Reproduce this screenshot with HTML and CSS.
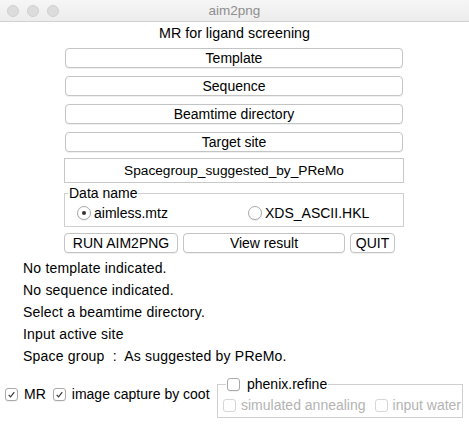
FILE: index.html
```html
<!DOCTYPE html>
<html>
<head>
<meta charset="utf-8">
<link rel="stylesheet" href="styles.css">
</head>
<body>
<div class="window">
  <div class="titlebar">
    <div class="lights"><span></span><span></span><span></span></div>
    <div class="title">aim2png</div>
    <div></div>
  </div>
  <div class="content">
    <div class="heading">MR for ligand screening</div>
    <div class="stack">
      <div class="btn wide">Template</div>
      <div class="btn wide">Sequence</div>
      <div class="btn wide">Beamtime directory</div>
      <div class="btn wide">Target site</div>
      <div class="entry">Spacegroup_suggested_by_PReMo</div>
      <fieldset class="frame data">
        <legend>Data name</legend>
        <div class="radios">
          <div class="radio on"><span class="rb"></span>aimless.mtz</div>
          <div class="radio"><span class="rb"></span>XDS_ASCII.HKL</div>
        </div>
      </fieldset>
      <div class="actions">
        <div class="btn run">RUN AIM2PNG</div>
        <div class="btn view">View result</div>
        <div class="btn quit">QUIT</div>
      </div>
    </div>
    <div class="status">
      <div>No template indicated.</div>
      <div>No sequence indicated.</div>
      <div>Select a beamtime directory.</div>
      <div>Input active site</div>
      <div>Space group &nbsp;:&nbsp; As suggested by PReMo.</div>
    </div>
    <div class="options">
      <div class="check on"><span class="cb"><svg viewBox="0 0 13 13"><path d="M3.2 6.8 L5.4 9.2 L9.8 3.6"/></svg></span>MR</div>
      <div class="check on"><span class="cb"><svg viewBox="0 0 13 13"><path d="M3.2 6.8 L5.4 9.2 L9.8 3.6"/></svg></span>image capture by coot</div>
      <fieldset class="frame phenix">
        <legend><span class="check"><span class="cb"></span>phenix.refine</span></legend>
        <div class="inner">
          <div class="check disabled"><span class="cb"></span>simulated annealing</div>
          <div class="check disabled"><span class="cb"></span>input water</div>
        </div>
      </fieldset>
    </div>
  </div>
</div>
</body>
</html>
```
FILE: styles.css
```css
* { box-sizing: border-box; }
html, body { margin: 0; padding: 0; background: #ffffff; }
body {
  font-family: "Liberation Sans", Arial, sans-serif;
  font-size: 14px;
  color: #000;
}
.window { width: 469px; height: 426px; overflow: hidden; background: #fff; }
.titlebar {
  height: 22px;
  background: linear-gradient(#f6f6f6, #ececec);
  border-bottom: 1px solid #d1d1d1;
  display: grid;
  grid-template-columns: 1fr auto 1fr;
  align-items: center;
}
.lights { display: flex; gap: 8px; padding-left: 7px; }
.lights span {
  width: 12px; height: 12px; border-radius: 50%;
  background: #dcdcdc; border: 1px solid #d0d0d0;
}
.title { font-size: 13.5px; color: #8e8e8e; }
.content { padding-top: 3px; }
.heading { text-align: center; font-size: 14.3px; line-height: 16px; }
.stack { margin: 7px 0 0 64px; width: 340px; display: flex; flex-direction: column; }
.btn {
  height: 20px; line-height: 18px; text-align: center;
  border: 1px solid #c4c4c4; border-radius: 4px; background: #fff;
  box-shadow: 0 1px 0 rgba(0,0,0,0.06);
}
.btn.wide { margin: 0 1px 8px; }
.btn.wide:nth-child(4) { margin-bottom: 6px; }
.entry {
  height: 25px; line-height: 23px; text-align: center; font-size: 13.7px;
  border: 1px solid #c9c9c9; background: #fff;
}
.frame {
  margin: 0; border: 1px solid #cfcfcf; padding: 0;
}
.data { margin-top: 3px; height: 41px; }
.frame legend { padding: 0 1px; margin-left: 3px; line-height: 14px; }
.radios { display: grid; grid-template-columns: 1fr 1fr; padding-top: 5px; }
.radio { display: flex; align-items: center; padding-left: 12px; gap: 3px; }
.radio:nth-child(2) { padding-left: 14px; }
.rb {
  width: 14px; height: 14px; border-radius: 50%;
  border: 1px solid #a9a9a9; background: #fff; position: relative;
  box-shadow: 0 1px 1px rgba(0,0,0,0.08);
}
.radio.on .rb::after {
  content: ""; position: absolute; left: 4px; top: 4px;
  width: 4px; height: 4px; border-radius: 50%; background: #333;
}
.actions { display: flex; gap: 5px; margin-top: 6px; }
.run { width: 114px; }
.view { width: 162px; }
.quit { width: 45px; }
.status { padding-left: 23px; margin-top: 4px; line-height: 22px; letter-spacing: 0.2px; }
.options { display: flex; align-items: flex-start; margin-top: 10px; padding-left: 5px; }
.check { display: flex; align-items: center; gap: 6px; }
.options > .check { margin-top: 9px; margin-right: 7px; flex: none; }
.cb {
  width: 13px; height: 13px; border-radius: 3px;
  border: 1px solid #a9a9a9; background: #fff; display: inline-block;
  box-shadow: 0 1px 1px rgba(0,0,0,0.06);
  flex: none;
}
.cb svg { width: 11px; height: 11px; display: block; }
.cb path { fill: none; stroke: #333; stroke-width: 1.3; }
.phenix { margin-left: auto; margin-right: 6px; width: 246px; height: 41px; flex: none; }
.phenix legend { margin-left: 8px; padding: 0 1px; }
.phenix legend .check { gap: 7px; }
.inner { display: flex; gap: 9px; padding: 6px 0 0 5px; white-space: nowrap; }
.check.disabled { color: #b3b3b3; gap: 5px; }
.check.disabled .cb { border-color: #d6d6d6; box-shadow: none; }
```
